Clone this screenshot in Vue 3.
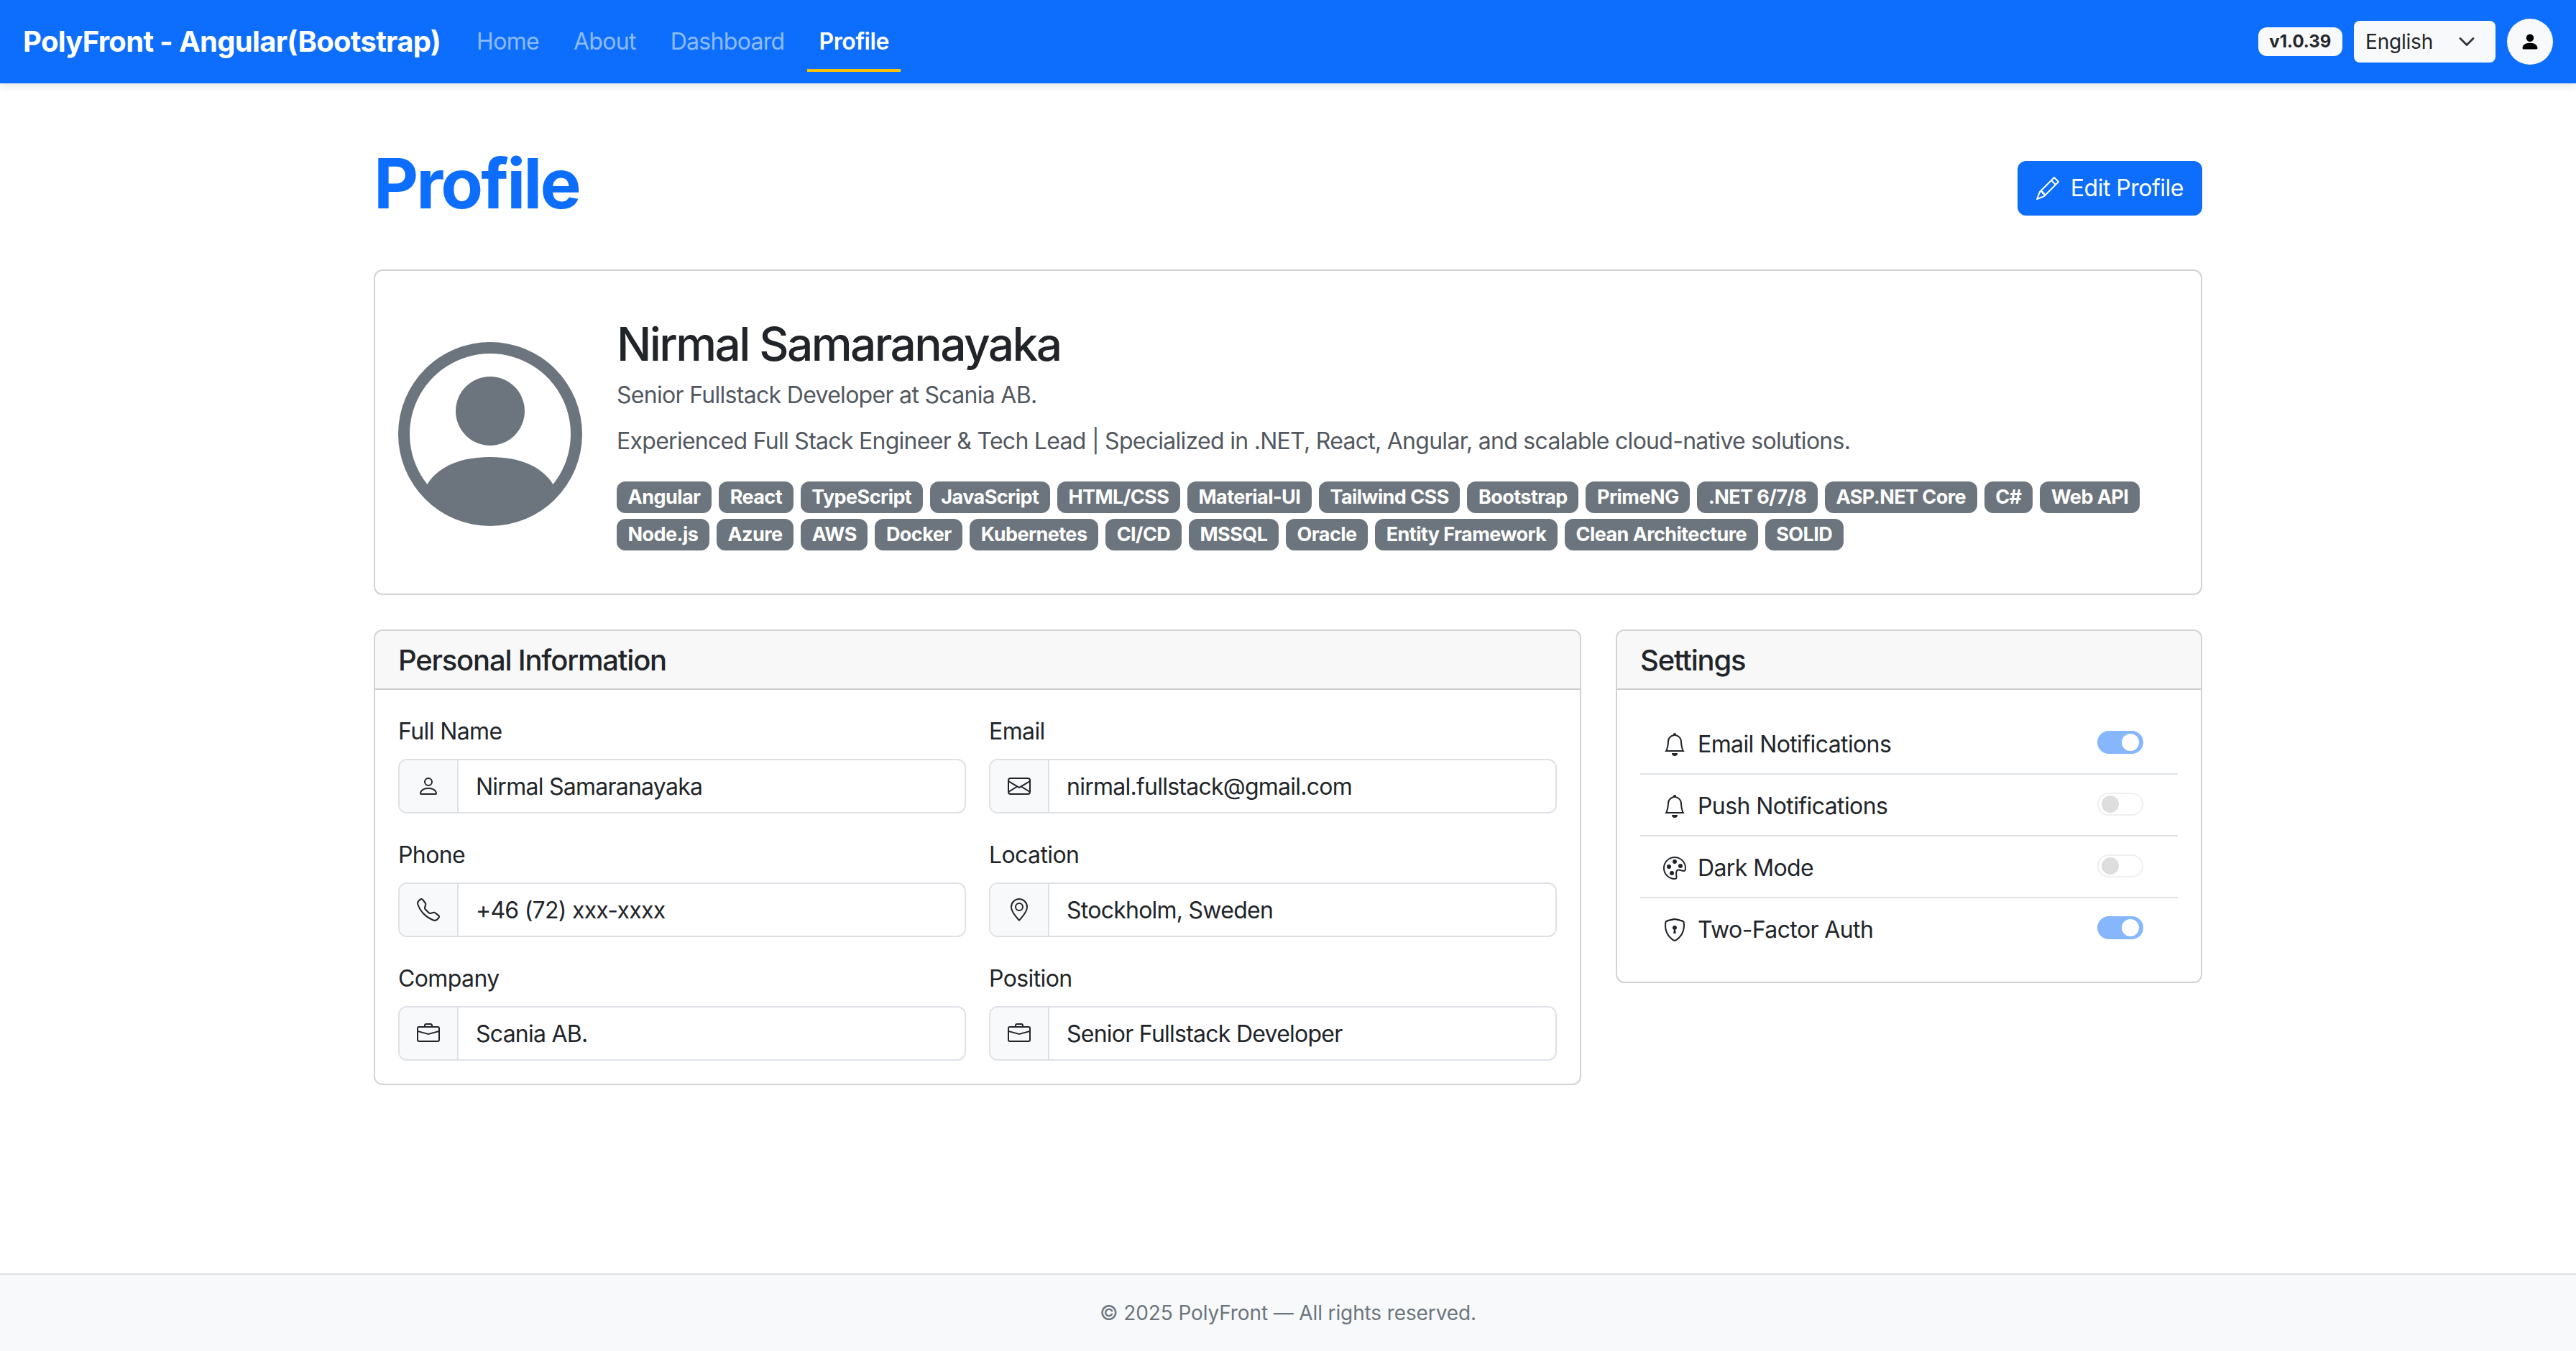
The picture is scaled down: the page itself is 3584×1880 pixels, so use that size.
<template>
  <div class="page">
    <nav class="navbar">
      <a class="brand">PolyFront - Angular(Bootstrap)</a>
      <ul class="nav-links">
        <li v-for="link in links" :key="link" :class="['nav-link', { active: link === 'Profile' }]">{{ link }}</li>
      </ul>
      <div class="nav-right">
        <span class="version">v1.0.39</span>
        <div class="lang-select">
          <span>English</span>
          <svg class="chevron" viewBox="0 0 16 16"><path d="m2 5 6 6 6-6" fill="none" stroke="#343a40" stroke-width="2" stroke-linecap="round" stroke-linejoin="round" /></svg>
        </div>
        <button class="user-btn">
          <svg viewBox="0 0 16 16"><path :d="icons.personFill" /></svg>
        </button>
      </div>
    </nav>

    <main class="container">
      <div class="page-head">
        <h1>Profile</h1>
        <button class="edit-btn">
          <svg viewBox="0 0 16 16"><path :d="icons.pencil" /></svg>
          Edit Profile
        </button>
      </div>

      <section class="profile-card">
        <svg class="avatar" viewBox="0 0 16 16">
          <path :d="icons.circleHead" />
          <path fill-rule="evenodd" :d="icons.circleRing" />
        </svg>
        <div class="profile-info">
          <h2>Nirmal Samaranayaka</h2>
          <p class="role">Senior Fullstack Developer at Scania AB.</p>
          <p class="bio">Experienced Full Stack Engineer &amp; Tech Lead | Specialized in .NET, React, Angular, and scalable cloud-native solutions.</p>
          <div class="skills">
            <span v-for="skill in skills" :key="skill" class="skill">{{ skill }}</span>
          </div>
        </div>
      </section>

      <div class="columns">
        <section class="card">
          <header class="card-header">Personal Information</header>
          <div class="card-body form-grid">
            <div v-for="field in fields" :key="field.label" class="field">
              <label>{{ field.label }}</label>
              <div class="input-group">
                <span class="input-icon">
                  <svg viewBox="0 0 16 16"><path v-for="d in field.icon" :key="d" :d="d" /></svg>
                </span>
                <span class="input-value">{{ field.value }}</span>
              </div>
            </div>
          </div>
        </section>

        <section class="card">
          <header class="card-header">Settings</header>
          <div class="card-body">
            <div v-for="item in settings" :key="item.label" class="setting">
              <svg class="setting-icon" viewBox="0 0 16 16"><path v-for="d in item.icon" :key="d" :d="d" /></svg>
              <span class="setting-label">{{ item.label }}</span>
              <span :class="['switch', { on: item.on }]"></span>
            </div>
          </div>
        </section>
      </div>
    </main>

    <footer class="footer">© 2025 PolyFront — All rights reserved.</footer>
  </div>
</template>

<script setup>
const links = ['Home', 'About', 'Dashboard', 'Profile']

const icons = {
  personFill: 'M3 14s-1 0-1-1 1-4 6-4 6 3 6 4-1 1-1 1zm5-6a3 3 0 1 0 0-6 3 3 0 0 0 0 6',
  pencil: 'M12.146.146a.5.5 0 0 1 .708 0l3 3a.5.5 0 0 1 0 .708l-10 10a.5.5 0 0 1-.168.11l-5 2a.5.5 0 0 1-.65-.65l2-5a.5.5 0 0 1 .11-.168zM11.207 2.5 13.5 4.793 14.793 3.5 12.5 1.207zm1.586 3L10.5 3.207 4 9.707V10h.5a.5.5 0 0 1 .5.5v.5h.5a.5.5 0 0 1 .5.5v.5h.293zm-9.761 5.175-.106.106-1.528 3.821 3.821-1.528.106-.106A.5.5 0 0 1 5 12.5V12h-.5a.5.5 0 0 1-.5-.5V11h-.5a.5.5 0 0 1-.468-.325',
  circleHead: 'M11 6a3 3 0 1 1-6 0 3 3 0 0 1 6 0',
  circleRing: 'M0 8a8 8 0 1 1 16 0A8 8 0 0 1 0 8m8-7a7 7 0 0 0-5.468 11.37C3.242 11.226 4.805 10 8 10s4.757 1.225 5.468 2.37A7 7 0 0 0 8 1',
  person: ['M8 8a3 3 0 1 0 0-6 3 3 0 0 0 0 6m2-3a2 2 0 1 1-4 0 2 2 0 0 1 4 0m4 8c0 1-1 1-1 1H3s-1 0-1-1 1-4 6-4 6 3 6 4m-1-.004c-.001-.246-.154-.986-.832-1.664C11.516 10.68 10.289 10 8 10s-3.516.68-4.168 1.332c-.678.678-.83 1.418-.832 1.664z'],
  envelope: ['M0 4a2 2 0 0 1 2-2h12a2 2 0 0 1 2 2v8a2 2 0 0 1-2 2H2a2 2 0 0 1-2-2zm2-1a1 1 0 0 0-1 1v.217l7 4.2 7-4.2V4a1 1 0 0 0-1-1zm13 2.383-4.708 2.825L15 11.105zm-.034 6.876-5.64-3.471L8 9.583l-1.326-.795-5.64 3.47A1 1 0 0 0 2 13h12a1 1 0 0 0 .966-.741M1 11.105l4.708-2.897L1 5.383z'],
  telephone: ['M3.654 1.328a.678.678 0 0 0-1.015-.063L1.605 2.3c-.483.484-.661 1.169-.45 1.77a17.6 17.6 0 0 0 4.168 6.608 17.6 17.6 0 0 0 6.608 4.168c.601.211 1.286.033 1.77-.45l1.034-1.034a.678.678 0 0 0-.063-1.015l-2.307-1.794a.68.68 0 0 0-.58-.122l-2.19.547a1.75 1.75 0 0 1-1.657-.459L5.482 8.062a1.75 1.75 0 0 1-.46-1.657l.548-2.19a.68.68 0 0 0-.122-.58zM1.884.511a1.745 1.745 0 0 1 2.612.163L6.29 2.98c.329.423.445.974.315 1.494l-.547 2.19a.68.68 0 0 0 .178.643l2.457 2.457a.68.68 0 0 0 .644.178l2.189-.547a1.75 1.75 0 0 1 1.494.315l2.306 1.794c.829.645.905 1.87.163 2.611l-1.034 1.034c-.74.74-1.846 1.065-2.877.702a18.6 18.6 0 0 1-7.01-4.42 18.6 18.6 0 0 1-4.42-7.009c-.362-1.03-.037-2.137.703-2.877z'],
  geo: ['M12.166 8.94c-.524 1.062-1.234 2.12-1.96 3.07A32 32 0 0 1 8 14.58a32 32 0 0 1-2.206-2.57c-.726-.95-1.436-2.008-1.96-3.07C3.304 7.867 3 6.862 3 6a5 5 0 0 1 10 0c0 .862-.305 1.867-.834 2.94M8 16s6-5.686 6-10A6 6 0 0 0 2 6c0 4.314 6 10 6 10', 'M8 8a2 2 0 1 1 0-4 2 2 0 0 1 0 4m0 1a3 3 0 1 0 0-6 3 3 0 0 0 0 6'],
  briefcase: ['M6.5 1A1.5 1.5 0 0 0 5 2.5V3H1.5A1.5 1.5 0 0 0 0 4.5v8A1.5 1.5 0 0 0 1.5 14h13a1.5 1.5 0 0 0 1.5-1.5v-8A1.5 1.5 0 0 0 14.5 3H11v-.5A1.5 1.5 0 0 0 9.5 1zm0 1h3a.5.5 0 0 1 .5.5V3H6v-.5a.5.5 0 0 1 .5-.5m1.886 6.914L15 7.151V12.5a.5.5 0 0 1-.5.5h-13a.5.5 0 0 1-.5-.5V7.15l6.614 1.764a1.5 1.5 0 0 0 .772 0M1.5 4h13a.5.5 0 0 1 .5.5v1.616L8.129 7.948a.5.5 0 0 1-.258 0L1 6.116V4.5a.5.5 0 0 1 .5-.5'],
  bell: ['M8 16a2 2 0 0 0 2-2H6a2 2 0 0 0 2 2M8 1.918l-.797.161A4 4 0 0 0 4 6c0 .628-.134 2.197-.459 3.742-.16.767-.376 1.566-.663 2.258h10.244c-.287-.692-.502-1.49-.663-2.258C12.134 8.197 12 6.628 12 6a4 4 0 0 0-3.203-3.92zM14.22 12c.223.447.481.801.78 1H1c.299-.199.557-.553.78-1C2.68 10.2 3 6.88 3 6c0-2.42 1.72-4.44 4.005-4.901a1 1 0 1 1 1.99 0A5 5 0 0 1 13 6c0 .88.32 4.2 1.22 6'],
  palette: ['M8 5a1.5 1.5 0 1 0 0-3 1.5 1.5 0 0 0 0 3m4 3a1.5 1.5 0 1 0 0-3 1.5 1.5 0 0 0 0 3M5.5 7a1.5 1.5 0 1 1-3 0 1.5 1.5 0 0 1 3 0m.5 6a1.5 1.5 0 1 0 0-3 1.5 1.5 0 0 0 0 3', 'M16 8c0 3.15-1.866 2.585-3.567 2.07C11.42 9.763 10.465 9.473 10 10c-.603.683-.475 1.819-.351 2.92C9.826 14.495 9.996 16 8 16a8 8 0 1 1 8-8m-8 7c.611 0 .654-.171.655-.176.078-.146.124-.464.07-1.119-.014-.168-.037-.37-.061-.591-.052-.464-.112-1.005-.118-1.462-.01-.707.083-1.61.704-2.314.369-.417.845-.578 1.272-.618.404-.038.812.026 1.16.104.343.077.702.186 1.025.284l.028.008c.346.105.658.199.953.266.653.148.904.083.991.024C14.717 9.38 15 9.161 15 8a7 7 0 1 0-7 7'],
  shield: ['M5.338 1.59a61 61 0 0 0-2.837.856.48.48 0 0 0-.328.39c-.554 4.157.726 7.19 2.253 9.188a10.7 10.7 0 0 0 2.287 2.233c.346.244.652.42.893.533q.18.085.293.118a1 1 0 0 0 .101.025 1 1 0 0 0 .1-.025q.114-.034.294-.118c.24-.113.547-.29.893-.533a10.7 10.7 0 0 0 2.287-2.233c1.527-1.997 2.807-5.031 2.253-9.188a.48.48 0 0 0-.328-.39c-.651-.213-1.75-.56-2.837-.855C9.552 1.29 8.531 1.067 8 1.067c-.53 0-1.552.223-2.662.524zM5.072.56C6.157.265 7.31 0 8 0s1.843.265 2.928.56c1.11.3 2.229.655 2.887.87a1.54 1.54 0 0 1 1.044 1.262c.596 4.477-.787 7.795-2.465 9.99a11.8 11.8 0 0 1-2.517 2.453 7 7 0 0 1-1.048.625c-.28.132-.581.24-.829.24s-.548-.108-.829-.24a7 7 0 0 1-1.048-.625 11.8 11.8 0 0 1-2.517-2.453C1.928 10.487.545 7.169 1.141 2.692A1.54 1.54 0 0 1 2.185 1.43 63 63 0 0 1 5.072.56', 'M9.5 6.5a1.5 1.5 0 0 1-1 1.415l.385 1.99a.5.5 0 0 1-.491.595h-.788a.5.5 0 0 1-.49-.595l.384-1.99a1.5 1.5 0 1 1 2-1.415']
}

const skills = [
  'Angular', 'React', 'TypeScript', 'JavaScript', 'HTML/CSS', 'Material-UI', 'Tailwind CSS', 'Bootstrap', 'PrimeNG',
  '.NET 6/7/8', 'ASP.NET Core', 'C#', 'Web API', 'Node.js', 'Azure', 'AWS', 'Docker', 'Kubernetes', 'CI/CD', 'MSSQL',
  'Oracle', 'Entity Framework', 'Clean Architecture', 'SOLID'
]

const fields = [
  { label: 'Full Name', value: 'Nirmal Samaranayaka', icon: icons.person },
  { label: 'Email', value: 'nirmal.fullstack@gmail.com', icon: icons.envelope },
  { label: 'Phone', value: '+46 (72) xxx-xxxx', icon: icons.telephone },
  { label: 'Location', value: 'Stockholm, Sweden', icon: icons.geo },
  { label: 'Company', value: 'Scania AB.', icon: icons.briefcase },
  { label: 'Position', value: 'Senior Fullstack Developer', icon: icons.briefcase }
]

const settings = [
  { label: 'Email Notifications', icon: icons.bell, on: true },
  { label: 'Push Notifications', icon: icons.bell, on: false },
  { label: 'Dark Mode', icon: icons.palette, on: false },
  { label: 'Two-Factor Auth', icon: icons.shield, on: true }
]
</script>

<style>
body {
  font-family: Inter, "Liberation Sans", sans-serif;
  color: #212529;
  background: #fff;
}
</style>

<style scoped>
.page {
  min-height: 1880px;
  display: flex;
  flex-direction: column;
  font-size: 32px;
  line-height: 1.5;
  letter-spacing: -0.7px;
}

.navbar {
  height: 116px;
  padding: 0 32px;
  display: flex;
  align-items: center;
  background: #0d6efd;
  box-shadow: 0 4px 12px rgba(0, 0, 0, 0.1);
}

.brand {
  font-size: 40px;
  font-weight: 700;
  color: #fff;
  margin-right: 34px;
  white-space: nowrap;
}

.nav-links {
  display: flex;
  gap: 16px;
  margin: 0;
  padding: 0;
  list-style: none;
}

.nav-link {
  padding: 16px;
  color: rgba(255, 255, 255, 0.55);
  position: relative;
}

.nav-link.active {
  color: #fff;
  font-weight: 600;
  letter-spacing: -0.4px;
}

.nav-link.active::after {
  content: '';
  position: absolute;
  left: 0;
  right: 0;
  bottom: -2px;
  height: 4px;
  background: #ffc107;
}

.nav-right {
  margin-left: auto;
  display: flex;
  align-items: center;
  gap: 16px;
}

.version {
  padding: 8.4px 15.6px;
  font-size: 24px;
  font-weight: 700;
  line-height: 1;
  letter-spacing: 0;
  background: #f8f9fa;
  border-radius: 12px;
}

.lang-select {
  width: 197px;
  height: 58px;
  padding: 0 28px 0 16px;
  box-sizing: border-box;
  display: flex;
  align-items: center;
  justify-content: space-between;
  font-size: 28px;
  letter-spacing: -0.2px;
  background: #f8f9fa;
  border-radius: 8px;
}

.chevron {
  width: 24px;
  height: 24px;
}

.user-btn {
  width: 64px;
  height: 64px;
  padding: 0;
  display: flex;
  align-items: center;
  justify-content: center;
  background: #f8f9fa;
  border: none;
  border-radius: 50%;
}

.user-btn svg {
  width: 28px;
  height: 28px;
}

.container {
  flex: 1;
  width: 2544px;
  margin: 0 auto;
  padding-top: 80px;
}

.page-head {
  display: flex;
  align-items: center;
  justify-content: space-between;
  margin-bottom: 48px;
}

h1 {
  margin: 2px 0 14px;
  font-size: 96px;
  font-weight: 700;
  line-height: 1.2;
  letter-spacing: -2.9px;
  color: #0d6efd;
}

.edit-btn {
  height: 76px;
  padding: 0 26px;
  display: flex;
  align-items: center;
  gap: 16px;
  font: inherit;
  letter-spacing: -0.5px;
  color: #fff;
  background: #0d6efd;
  border: none;
  border-radius: 12px;
}

.edit-btn svg {
  width: 32px;
  height: 32px;
  fill: #fff;
}

.profile-card {
  padding: 64px 32px 60px;
  display: flex;
  align-items: center;
  gap: 48px;
  border: 2px solid rgba(0, 0, 0, 0.175);
  border-radius: 12px;
}

.avatar {
  flex: none;
  width: 256px;
  height: 256px;
  fill: #6c757d;
}

.profile-info {
  flex: 1;
  min-width: 0;
}

h2 {
  margin: 0 0 8px;
  font-size: 64px;
  font-weight: 500;
  line-height: 1.2;
  letter-spacing: -2.6px;
}

.role {
  margin: 0 0 16px;
  color: #52585f;
}

.bio {
  margin: 0 0 32px;
  letter-spacing: -0.72px;
  color: #52585f;
}

.skills {
  display: flex;
  flex-wrap: wrap;
  gap: 8px 10px;
}

.skill {
  padding: 8.5px 15.6px;
  font-size: 27px;
  font-weight: 700;
  line-height: 1;
  letter-spacing: -0.57px;
  color: #fff;
  background: #6c757d;
  border-radius: 12px;
}

.columns {
  margin-top: 48px;
  display: grid;
  grid-template-columns: 1680px 816px;
  gap: 48px;
  align-items: start;
}

.card {
  border: 2px solid rgba(0, 0, 0, 0.175);
  border-radius: 12px;
  overflow: hidden;
}

.card-header {
  padding: 17px 32px 15px;
  font-size: 40px;
  font-weight: 500;
  line-height: 1.2;
  letter-spacing: -1.2px;
  background: #f8f8f8;
  border-bottom: 2px solid rgba(0, 0, 0, 0.175);
}

.card-body {
  padding: 32px;
}

.form-grid {
  display: grid;
  grid-template-columns: 1fr 1fr;
  gap: 32px;
}

.field label {
  display: block;
  padding-top: 2px;
  margin-bottom: 14px;
  letter-spacing: -0.6px;
}

.input-group {
  height: 76px;
  box-sizing: border-box;
  display: flex;
  border: 2px solid #dee2e6;
  border-radius: 12px;
  overflow: hidden;
}

.input-icon {
  width: 80px;
  display: flex;
  align-items: center;
  justify-content: center;
  background: #f8f9fa;
  border-right: 2px solid #dee2e6;
}

.input-icon svg {
  width: 32px;
  height: 32px;
  fill: #212529;
}

.input-value {
  padding: 2px 24px 0;
  display: flex;
  align-items: center;
  letter-spacing: -0.75px;
}

.setting {
  padding: 20px 48px 16px 32px;
  display: flex;
  align-items: center;
  border-bottom: 2px solid #dee2e6;
  letter-spacing: -0.6px;
}

.setting:last-child {
  border-bottom: none;
}

.setting-icon {
  width: 32px;
  height: 32px;
  margin-right: 16px;
  fill: #212529;
}

.setting-label {
  flex: 1;
}

.switch {
  width: 64px;
  height: 32px;
  margin-top: -6px;
  box-sizing: border-box;
  display: flex;
  align-items: center;
  padding: 0 4px;
  background: #fff;
  border: 2px solid #efefef;
  border-radius: 16px;
}

.switch::before {
  content: '';
  width: 24px;
  height: 24px;
  background: #dedede;
  border-radius: 50%;
}

.switch.on {
  justify-content: flex-end;
  background: #86b7fe;
  border-color: #86b7fe;
}

.switch.on::before {
  background: #fff;
}

.footer {
  padding: 32px;
  font-size: 28px;
  letter-spacing: -0.12px;
  text-align: center;
  color: #6c757d;
  background: #f8f9fa;
  border-top: 2px solid #dee2e6;
}
</style>
